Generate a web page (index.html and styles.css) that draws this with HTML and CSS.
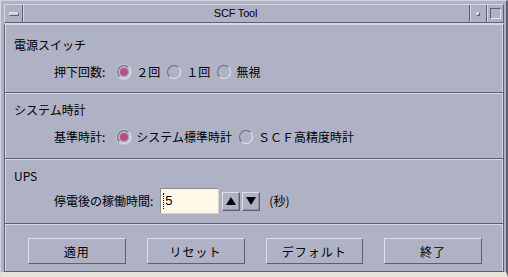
FILE: index.html
```html
<!DOCTYPE html>
<html lang="ja">
<head>
<meta charset="utf-8">
<title>SCF Tool</title>
<link rel="stylesheet" href="styles.css">
</head>
<body>
<div class="window">
  <div class="titlebar">
    <div class="tb-btn tb-menu"><span class="menu-icon"></span></div>
    <div class="tb-title">SCF Tool</div>
    <div class="tb-btn tb-min"><span class="min-icon"></span></div>
    <div class="tb-btn tb-max"><span class="max-icon"></span></div>
  </div>
  <div class="content">
    <section class="group g1">
      <div class="group-title">電源スイッチ</div>
      <div class="row">
        <span class="label l-short">押下回数:</span>
        <span class="opt"><span class="radio checked"></span><span class="opt-text">２回</span></span>
        <span class="opt"><span class="radio"></span><span class="opt-text">１回</span></span>
        <span class="opt"><span class="radio"></span><span class="opt-text">無視</span></span>
      </div>
    </section>
    <section class="group g2">
      <div class="group-title">システム時計</div>
      <div class="row">
        <span class="label l-short">基準時計:</span>
        <span class="opt"><span class="radio checked"></span><span class="opt-text">システム標準時計</span></span>
        <span class="opt"><span class="radio"></span><span class="opt-text">ＳＣＦ高精度時計</span></span>
      </div>
    </section>
    <section class="group g3">
      <div class="group-title">UPS</div>
      <div class="row row-field">
        <span class="label l-long">停電後の稼働時間:</span>
        <span class="field"><span class="caret"></span>5</span>
        <span class="spin">
          <svg width="10" height="8" viewBox="0 0 10 8"><polygon points="5,0 10,8 0,8" fill="#000"/></svg>
        </span>
        <span class="spin">
          <svg width="10" height="8" viewBox="0 0 10 8"><polygon points="0,0 10,0 5,8" fill="#000"/></svg>
        </span>
        <span class="unit">(秒)</span>
      </div>
    </section>
    <div class="buttons">
      <button class="btn">適用</button>
      <button class="btn">リセット</button>
      <button class="btn">デフォルト</button>
      <button class="btn">終了</button>
    </div>
  </div>
</div>
</body>
</html>
```

FILE: styles.css
```css
html, body {
  margin: 0;
  padding: 0;
  background: #afb2c4;
}

.window {
  width: 508px;
  height: 277px;
  box-sizing: border-box;
  background: #afb2c4;
  border-top: 1px solid #d2d4de;
  border-left: 1px solid #d2d4de;
  border-right: 2px solid #5d6070;
  border-bottom: 5px solid #e6e3d9;
  padding: 3px 2px 0 3px;
  display: flex;
  flex-direction: column;
  font-family: "Noto Sans CJK JP", "Noto Sans", sans-serif;
  font-size: 12px;
  color: #000;
}

/* ---------- title bar ---------- */
.titlebar {
  height: 19px;
  box-sizing: border-box;
  display: flex;
  border-top: 1px solid #d6d8e2;
  border-left: 1px solid #d6d8e2;
  border-bottom: 1px solid #5d6070;
  border-right: 1px solid #5d6070;
}

.tb-btn {
  display: flex;
  align-items: center;
  justify-content: center;
  box-sizing: border-box;
}

.tb-menu {
  width: 18px;
  border-right: 1px solid #5d6070;
}

.menu-icon {
  width: 10px;
  height: 4px;
  box-sizing: border-box;
  background: #cfd1db;
  border: 1px solid #5d6070;
  border-top-color: #e2e4ec;
  border-left-color: #e2e4ec;
}

.tb-title {
  flex: 1;
  text-align: center;
  padding-right: 22px;
  font-family: "Liberation Sans", sans-serif;
  font-size: 11px;
  line-height: 17px;
  letter-spacing: -0.2px;
  border-left: 1px solid #d6d8e2;
}

.tb-min {
  width: 17px;
  border-left: 1px solid #5d6070;
  box-shadow: inset 1px 0 #d6d8e2;
}

.min-icon {
  width: 4px;
  height: 4px;
  box-sizing: border-box;
  background: #cfd1db;
  border: 1px solid #5d6070;
  border-top-color: #e2e4ec;
  border-left-color: #e2e4ec;
}

.tb-max {
  width: 17px;
  border-left: 1px solid #5d6070;
  box-shadow: inset 1px 0 #d6d8e2;
}

.max-icon {
  width: 11px;
  height: 11px;
  box-sizing: border-box;
  border: 1px solid #e2e4ec;
  border-top-color: #5d6070;
  border-left-color: #5d6070;
}

/* ---------- content ---------- */
.content {
  flex: 1;
  display: flex;
  flex-direction: column;
  border-top: 2px solid #d6d8e2;
  border-left: 1px solid #5d6070;
  border-right: 1px solid #5d6070;
  border-bottom: 1px solid #5d6070;
  box-shadow: inset 1px 0 #d6d8e2, inset -1px 0 #d6d8e2;
}

.group {
  padding-left: 9px;
  border-bottom: 1px solid #5d6070;
}

.g1 {
  padding-top: 12px;
  padding-bottom: 12px;
}

.g2 {
  border-top: 1px solid #d6d8e2;
  padding-top: 8px;
  padding-bottom: 13px;
}

.g3 {
  border-top: 1px solid #d6d8e2;
  padding-top: 8px;
  padding-bottom: 9px;
}

.group-title {
  height: 16px;
  line-height: 16px;
}

.row {
  display: flex;
  align-items: center;
  height: 16px;
  line-height: 16px;
  margin-top: 11px;
  padding-left: 40px;
  white-space: nowrap;
}

.row-field {
  height: 26px;
  margin-top: 4px;
}

.label.l-short {
  margin-right: 12px;
}

.label.l-long {
  margin-right: 7px;
}

.opt {
  display: flex;
  align-items: center;
  margin-right: 7px;
}

.radio {
  position: relative;
  width: 14px;
  height: 14px;
  box-sizing: border-box;
  border-radius: 50%;
  border: 1px solid #6a6d7c;
  border-right-color: #e4e6ee;
  border-bottom-color: #e4e6ee;
  margin-right: 5px;
}

.radio.checked {
  box-shadow: 0 0 0 1px #c4c6d2;
}

.radio.checked::after {
  content: "";
  position: absolute;
  left: 2px;
  top: 2px;
  width: 8px;
  height: 8px;
  border-radius: 50%;
  background: #b5507f;
}

.field {
  position: relative;
  width: 59px;
  height: 26px;
  box-sizing: border-box;
  background: #fff8e9;
  border: 1px solid #8f8d86;
  border-right-color: #d8d2c0;
  border-bottom-color: #d8d2c0;
  padding-left: 4px;
  line-height: 24px;
  font-family: "Liberation Sans", sans-serif;
  font-size: 13px;
}

.caret {
  position: absolute;
  left: 2px;
  top: 4px;
  width: 1px;
  height: 16px;
  border-left: 1px dotted #000;
}

.spin {
  display: flex;
  align-items: center;
  justify-content: center;
  width: 18px;
  height: 19px;
  box-sizing: border-box;
  border: 1px solid #dcdee6;
  border-right-color: #5d6070;
  border-bottom-color: #5d6070;
  box-shadow: inset -1px -1px #8e91a0;
  margin-left: 3px;
}

.spin + .spin {
  margin-left: 2px;
}

.unit {
  margin-left: 9px;
}

/* ---------- buttons ---------- */
.buttons {
  flex: 1;
  display: grid;
  grid-template-columns: repeat(4, 1fr);
  column-gap: 21px;
  align-items: start;
  padding: 13px 21px 0 23px;
  border-top: 1px solid #d6d8e2;
}

.btn {
  height: 26px;
  margin: 0;
  padding: 0;
  background: #afb2c4;
  border: 1px solid #dcdee6;
  border-right-color: #5d6070;
  border-bottom-color: #5d6070;
  font-family: "Noto Sans CJK JP", "Noto Sans", sans-serif;
  font-size: 12px;
  color: #000;
  letter-spacing: 1px;
}
```
